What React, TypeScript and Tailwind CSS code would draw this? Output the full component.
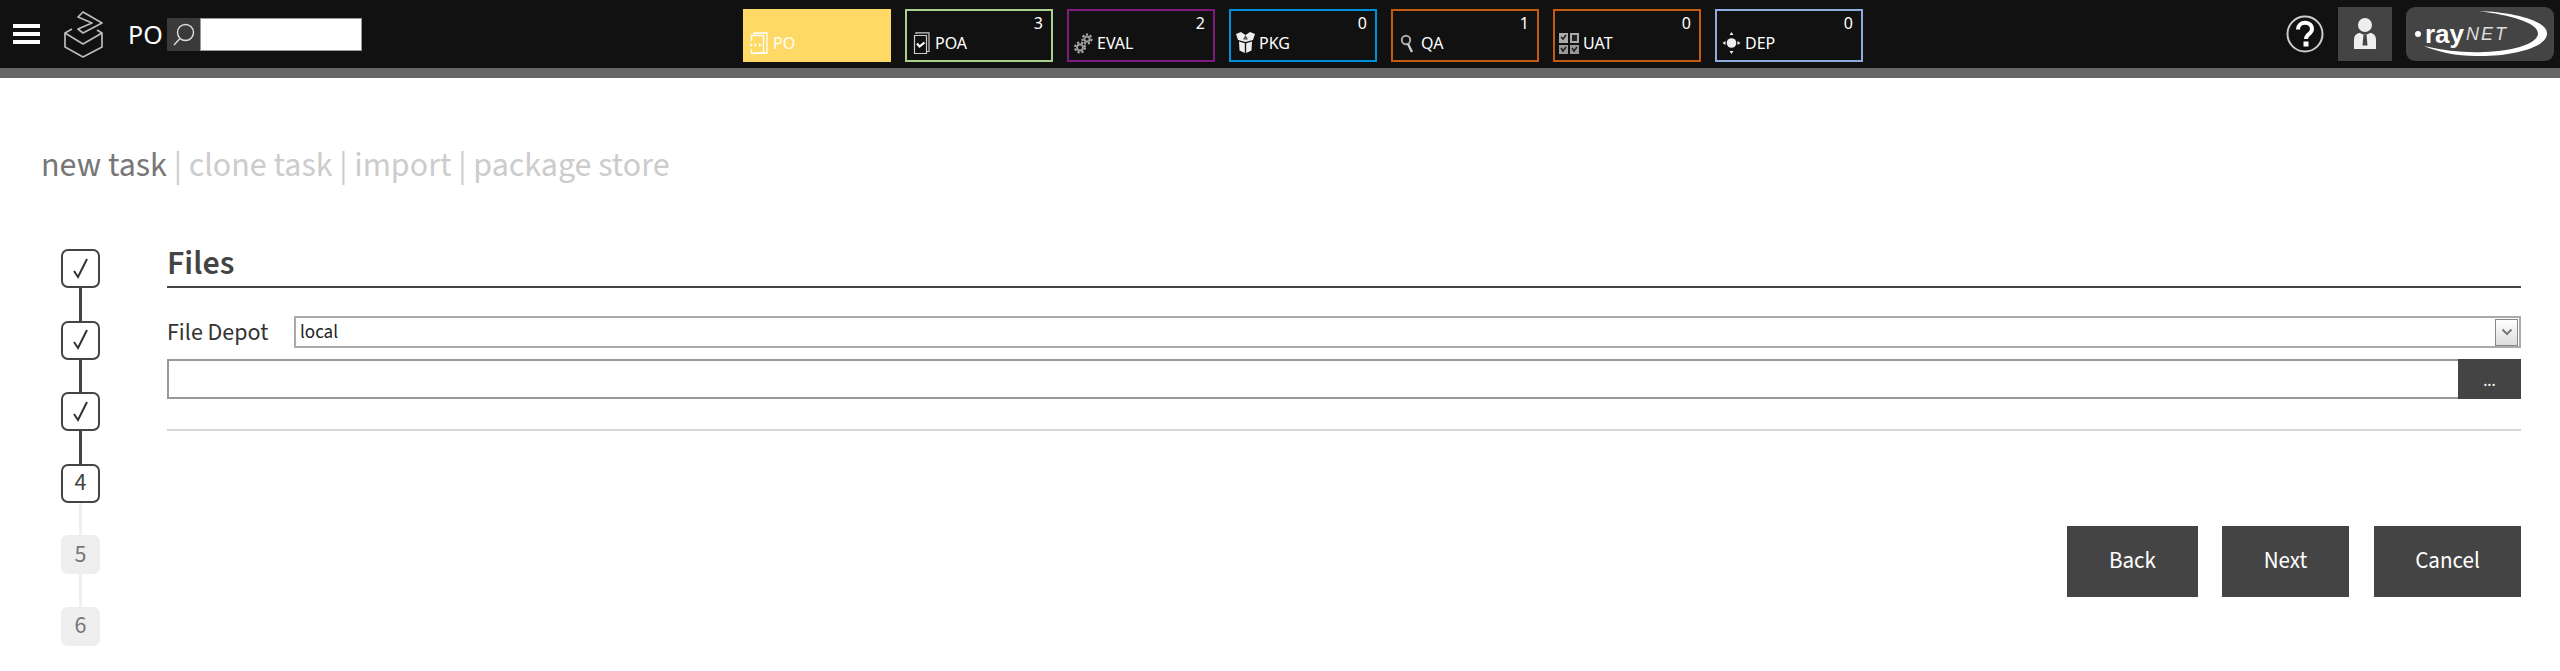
import React from "react";

type Pill = { label: string; count?: string; border: string; icon: React.ReactNode; active?: boolean };

function IconPO() {
  return (
    <svg width="18" height="22" viewBox="0 0 18 22" fill="none" stroke="#fff" strokeWidth="1.300">
      <path d="M4 3.500V1H17V21H4" />
      <path d="M1.500 9V3.500H13.500V21.500H1.500V17" />
      <path d="M0 11l2.500 2L0 15zM4.500 11l2.500 2-2.500 2zM9 11l2.500 2L9 15z" fill="#fff" stroke="none" />
    </svg>
  );
}
function IconPOA() {
  return (
    <svg width="17" height="22" viewBox="0 0 17 22" fill="none" stroke="#ccc" strokeWidth="1.200">
      <path d="M3 2V.8H16V19.500H14" />
      <path d="M1.500 3.500H13.500V21.500H1.500z" />
      <path d="M4 11.500l2.500 3 5-4" stroke="#fff" strokeWidth="2.200" />
    </svg>
  );
}
function Gear({ cx, cy, r }: { cx: number; cy: number; r: number }) {
  return (
    <g>
      <circle cx={cx} cy={cy} r={r} fill="none" stroke="#999" strokeWidth="2" />
      <circle cx={cx} cy={cy} r={r + 2} fill="none" stroke="#aaa" strokeWidth="2" strokeDasharray="2.200 1.800" />
    </g>
  );
}
function IconEval() {
  return (
    <svg width="19" height="21" viewBox="0 0 19 21">
      <Gear cx={13} cy={6} r={2.600} />
      <Gear cx={6} cy={14.500} r={3} />
    </svg>
  );
}
function IconPKG() {
  return (
    <svg width="19" height="22" viewBox="0 0 19 22" fill="#eee">
      <path d="M0 2l5-2 4.500 3L14 0l5 2-2 6-7.500 2L2 8z" />
      <path d="M3 9.500l5.800 1.800V21L3.500 18.500z" />
      <path d="M16 9.500l-5.800 1.800V21l5.300-2.500z" />
      <path d="M9.500 3L7 7.500h5z" fill="#555" />
    </svg>
  );
}
function IconQA() {
  return (
    <svg width="14" height="21" viewBox="0 0 14 21" fill="none" stroke="#aaa">
      <circle cx="6" cy="7" r="4.200" strokeWidth="2" />
      <path d="M8 11l4 8" stroke="#ccc" strokeWidth="2.400" />
    </svg>
  );
}
function IconUAT() {
  return (
    <svg width="20" height="21" viewBox="0 0 20 21" fill="none">
      <rect x="0" y="0" width="9" height="10" fill="#aaa" />
      <rect x="11" y="0" width="9" height="10" fill="#aaa" />
      <rect x="0" y="12" width="9" height="9" fill="#999" />
      <rect x="11" y="12" width="9" height="9" fill="#999" />
      <rect x="13" y="2" width="5" height="6" fill="#222" />
      <g stroke="#222" strokeWidth="1.600">
        <path d="M2 4l2 2 3-4M2 15l2 3 3-4M13 15l2 3 3-4" />
      </g>
    </svg>
  );
}
function IconDEP() {
  return (
    <svg width="19" height="24" viewBox="0 0 19 24" fill="#eee">
      <circle cx="9.500" cy="12" r="4.800" />
      <path d="M9.500 1l2 3h-4zM9.500 23l2-3h-4zM.5 12l3-2v4zM18.500 12l-3-2v4z" />
    </svg>
  );
}
function IconSearch() {
  return (
    <svg width="22" height="23" viewBox="0 0 22 23" fill="none" stroke="#ddd" strokeWidth="1.400">
      <circle cx="12.500" cy="9.500" r="8" />
      <path d="M7 15.500L1 22" />
    </svg>
  );
}

const pills: Pill[] = [
  { label: "PO", border: "border-[#ffd966]", icon: <IconPO />, active: true },
  { label: "POA", count: "3", border: "border-[#a9d18e]", icon: <IconPOA /> },
  { label: "EVAL", count: "2", border: "border-[#7f1a7f]", icon: <IconEval /> },
  { label: "PKG", count: "0", border: "border-[#0090d8]", icon: <IconPKG /> },
  { label: "QA", count: "1", border: "border-[#c55a11]", icon: <IconQA /> },
  { label: "UAT", count: "0", border: "border-[#c55a11]", icon: <IconUAT /> },
  { label: "DEP", count: "0", border: "border-[#8faadc]", icon: <IconDEP /> },
];

function PillBox({ p }: { p: Pill }) {
  return (
    <div
      className={`flex h-[53px] w-[148px] flex-col border-2 px-[4px] text-white ${p.border} ${
        p.active ? "bg-[#ffd966]" : "bg-[#111]"
      }`}
    >
      <div className="flex h-[22px] items-end justify-end pr-[4px] text-[16px] leading-[20px]">{p.count}</div>
      <div className="flex h-[20px] items-center gap-[4px] text-[16px] leading-[20px]">
        <span className="flex w-[20px] shrink-0 items-center justify-center">{p.icon}</span>
        <span>{p.label}</span>
      </div>
    </div>
  );
}

function Step({ n, state, last }: { n: string; state: "done" | "cur" | "off"; last?: boolean }) {
  const off = state === "off";
  return (
    <div className="flex flex-col items-center">
      <div
        className={`flex h-[39px] w-[39px] items-center justify-center rounded-[7px] font-['Source_Sans_3','Lato',sans-serif] text-[24px] ${
          off ? "bg-[#eee] text-[#777]" : "border-2 border-[#444] text-[#444]"
        }`}
      >
        {state === "done" ? (
          <svg width="18" height="24" viewBox="0 0 18 24" fill="none" stroke="#333" strokeWidth="2">
            <path d="M2 14l4 6L15 2" />
          </svg>
        ) : (
          n
        )}
      </div>
      {!last && <div className={`h-[32.500px] w-[3.500px] ${state === "done" ? "bg-[#444]" : "bg-[#eee]"}`} />}
    </div>
  );
}

export default function App() {
  return (
    <div className="h-[671px] overflow-hidden bg-white font-['Noto_Sans',sans-serif]">
      <header className="flex h-[78px] items-start border-b-[10px] border-[#666] bg-[#111]">
        <div className="flex h-[68px] w-[743px] shrink-0 items-center">
          <div className="ml-[13px] flex w-[27px] flex-col gap-[4px]">
            <div className="h-[4px] bg-white" />
            <div className="h-[4px] bg-white" />
            <div className="h-[4px] bg-white" />
          </div>
          <svg className="ml-[24px]" width="40" height="47" viewBox="0 0 40 47" fill="none" stroke="#bbb" strokeWidth="1.700" strokeLinejoin="round">
            <path d="M19 1L38 12 19 22 14 18 28 12 14 6z" />
            <path d="M1 22V36L19 46 38 36V22L19 33z" />
            <path d="M1 22l7-4M38 22l-5-3" />
          </svg>
          <span className="ml-[24px] w-[39px] text-[25px] leading-none text-white">PO</span>
          <div className="flex h-[33px] w-[33px] items-center justify-center bg-[#3a3a3a]">
            <IconSearch />
          </div>
          <div className="h-[33px] w-[162px] border border-[#999] bg-white" />
        </div>
        <div className="mt-[9px] flex gap-[14px]">
          {pills.map((p) => (
            <PillBox key={p.label} p={p} />
          ))}
        </div>
        <div className="ml-auto flex h-[68px] items-center">
          <svg width="38" height="38" viewBox="0 0 38 38" fill="none">
            <circle cx="19" cy="19" r="17.500" stroke="#ccc" strokeWidth="2" />
            <path d="M12 14.500c0-9 14-9 14-.5 0 5-6 5-6 10" stroke="#fff" strokeWidth="4" />
            <rect x="17.500" y="26.500" width="5" height="5" fill="#fff" />
          </svg>
          <div className="ml-[14px] flex h-[54px] w-[54px] items-center justify-center bg-[#444]">
            <svg width="24" height="32" viewBox="0 0 24 32">
              <circle cx="12" cy="7" r="7" fill="#eee" />
              <path d="M1 31V22c0-5 3-7 6-7l3 1.500h4l3-1.500c3 0 6 2 6 7v9z" fill="#eee" />
              <path d="M10.500 16.500h3l1 11h-5z" fill="#444" />
            </svg>
          </div>
          <div className="relative mx-[6px] ml-[14px] flex h-[54px] w-[148px] items-center rounded-[9px] bg-[#444] leading-none">
            <svg className="absolute left-0 top-0" width="148" height="54" viewBox="0 0 148 54" fill="none">
              <path d="M72 4C105 5 142 13 141 27 140 42 100 50 70 49 50 49 32 45 18 39 40 44 60 46 78 45 110 44 131 36 132 27 133 16 105 8 72 4z" fill="#fff" />
            </svg>
            <span className="relative ml-[9px] h-[6px] w-[6px] rounded-full bg-white" />
            <span className="relative ml-[4px] font-['Liberation_Sans',sans-serif] text-[26px] font-bold text-white">ray</span>
            <span className="relative ml-[2px] font-['Liberation_Sans',sans-serif] text-[18px] italic tracking-[2px] text-[#ddd]">NET</span>
          </div>
        </div>
      </header>

      <div className="ml-[41px] mt-[65px] flex h-[46px] items-center font-['Source_Sans_3','Lato',sans-serif] text-[34px] leading-none">
        <span className="text-[#777]">new task</span>
        <span className="text-[#ccc]">&nbsp;| clone task | import | package store</span>
      </div>

      <div className="mt-[60px] flex">
        <div className="ml-[61px] w-[39px]">
          <Step n="1" state="done" />
          <Step n="2" state="done" />
          <Step n="3" state="done" />
          <Step n="4" state="cur" />
          <Step n="5" state="off" />
          <Step n="6" state="off" last />
        </div>
        <div className="ml-[67px] mt-[1px] w-[2354px] font-['Source_Sans_3','Lato',sans-serif]">
          <div className="flex h-[38px] items-end border-b-2 border-[#444] pb-[4px] text-[34px] leading-[36px] font-semibold text-[#444]">Files</div>
          <div className="mt-[28px] flex h-[32px] items-center">
            <label className="w-[127px] pt-[2px] text-[24px] text-[#333]">File Depot</label>
            <div className="flex h-[32px] flex-1 items-center justify-between border-2 border-[#aaa] pl-[4px] pr-[1px] text-[19px] text-[#222]">
              <span className="pt-[2px]">local</span>
              <div className="flex h-[27px] w-[23px] items-center justify-center border border-[#888] bg-gradient-to-b from-white to-[#ddd]">
                <svg width="12" height="8" viewBox="0 0 12 8" fill="none" stroke="#777" strokeWidth="2">
                  <path d="M1.500 1.500L6 6l4.500-4.500" />
                </svg>
              </div>
            </div>
          </div>
          <div className="mt-[11px] flex h-[40px]">
            <div className="flex-1 border-2 border-r-0 border-[#999] bg-white" />
            <button className="flex w-[63px] items-center justify-center bg-[#444] pt-[6px] text-[17px] text-white">...</button>
          </div>
          <div className="mt-[30px] h-[1.500px] bg-[#d8d8d8]" />
          <div className="mt-[95.500px] flex justify-end">
            <button className="h-[71px] w-[131px] bg-[#444] text-[23px] text-white">Back</button>
            <button className="ml-[24px] h-[71px] w-[127px] bg-[#444] text-[23px] text-white">Next</button>
            <button className="ml-[25px] h-[71px] w-[147px] bg-[#444] text-[23px] text-white">Cancel</button>
          </div>
        </div>
      </div>
    </div>
  );
}
